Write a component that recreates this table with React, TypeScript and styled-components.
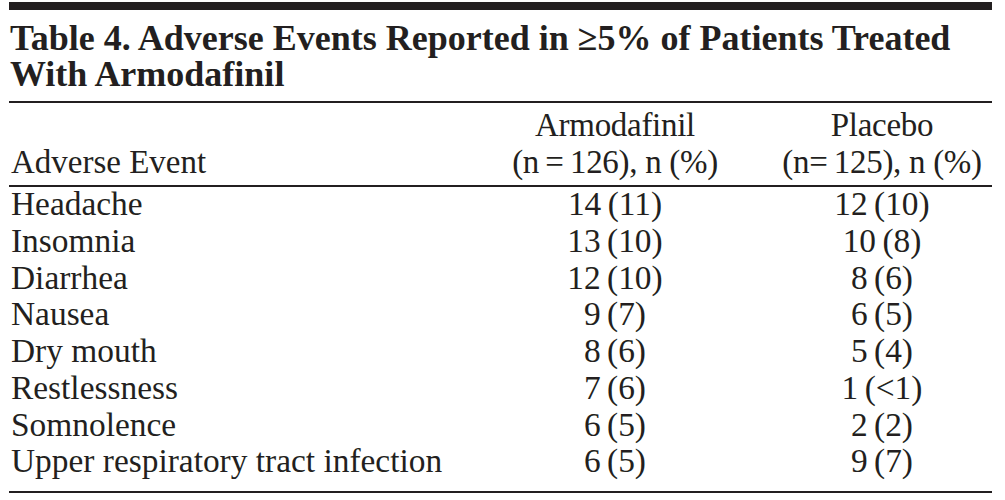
import styled, { createGlobalStyle } from "styled-components";

const rows: [string, string, string][] = [
  ["Headache", "14 (11)", "12 (10)"],
  ["Insomnia", "13 (10)", "10 (8)"],
  ["Diarrhea", "12 (10)", "8 (6)"],
  ["Nausea", "9 (7)", "6 (5)"],
  ["Dry mouth", "8 (6)", "5 (4)"],
  ["Restlessness", "7 (6)", "1 (<1)"],
  ["Somnolence", "6 (5)", "2 (2)"],
  ["Upper respiratory tract infection", "6 (5)", "9 (7)"],
];

const GlobalStyle = createGlobalStyle`
  body {
    margin: 0;
    background: #ffffff;
    color: #231f20;
    font-family: "Liberation Serif", "Times New Roman", serif;
  }
`;

const App = () => {
  return (
    <>
      <GlobalStyle />
      <Figure>
        <TopBar />
        <Title>
          Table 4. Adverse Events Reported in ≥5% of Patients Treated
          <br />
          With Armodafinil
        </Title>
        <Rule />
        <HeadRow>
          <HeadCell>Adverse Event</HeadCell>
          <HeadCell $center>
            Armodafinil
            <br />
            (n{"\u2009"}={"\u2009"}126), n (%)
          </HeadCell>
          <HeadCell $center>
            Placebo
            <br />
            (n={"\u2009"}125), n (%)
          </HeadCell>
        </HeadRow>
        <Rule />
        <Body>
          {rows.map(([event, drug, placebo]) => (
            <Row key={event}>
              <Cell>{event}</Cell>
              <Cell $center $numeric>{drug}</Cell>
              <Cell $center $numeric>{placebo}</Cell>
            </Row>
          ))}
        </Body>
        <Rule />
      </Figure>
    </>
  );
};

const Figure = styled.div`
  width: 983px;
  padding: 2px 0 0 9px;
`;

const TopBar = styled.div`
  height: 8px;
  background-color: #231f20;
`;

const Title = styled.h1`
  margin: 10px 0 9px 1px;
  font-size: 36px;
  line-height: 36px;
  font-weight: 700;
`;

const Rule = styled.div`
  height: 2px;
  background-color: #231f20;
`;

const columns = "449px 314px 220px";

const HeadRow = styled.div`
  display: grid;
  grid-template-columns: ${columns};
  align-items: end;
  padding: 4px 0;
`;

const HeadCell = styled.div<{ $center?: boolean }>`
  font-size: 33px;
  line-height: 37px;
  padding-left: ${(p) => (p.$center ? 0 : 2)}px;
  text-align: ${(p) => (p.$center ? "center" : "left")};
  letter-spacing: ${(p) => (p.$center ? "-0.3px" : "0")};
  white-space: nowrap;
`;

const Body = styled.div`
  padding: 0 0 10px;
`;

const Row = styled.div`
  display: grid;
  grid-template-columns: ${columns};
  height: 36.75px;
  align-items: start;
`;

const Cell = styled.div<{ $center?: boolean; $numeric?: boolean }>`
  font-size: 33.4px;
  line-height: 33px;
  padding-left: ${(p) => (p.$center ? 0 : 2)}px;
  text-align: ${(p) => (p.$center ? "center" : "left")};
  word-spacing: ${(p) => (p.$numeric ? "-2px" : "0")};
  white-space: nowrap;
`;

export default App;
